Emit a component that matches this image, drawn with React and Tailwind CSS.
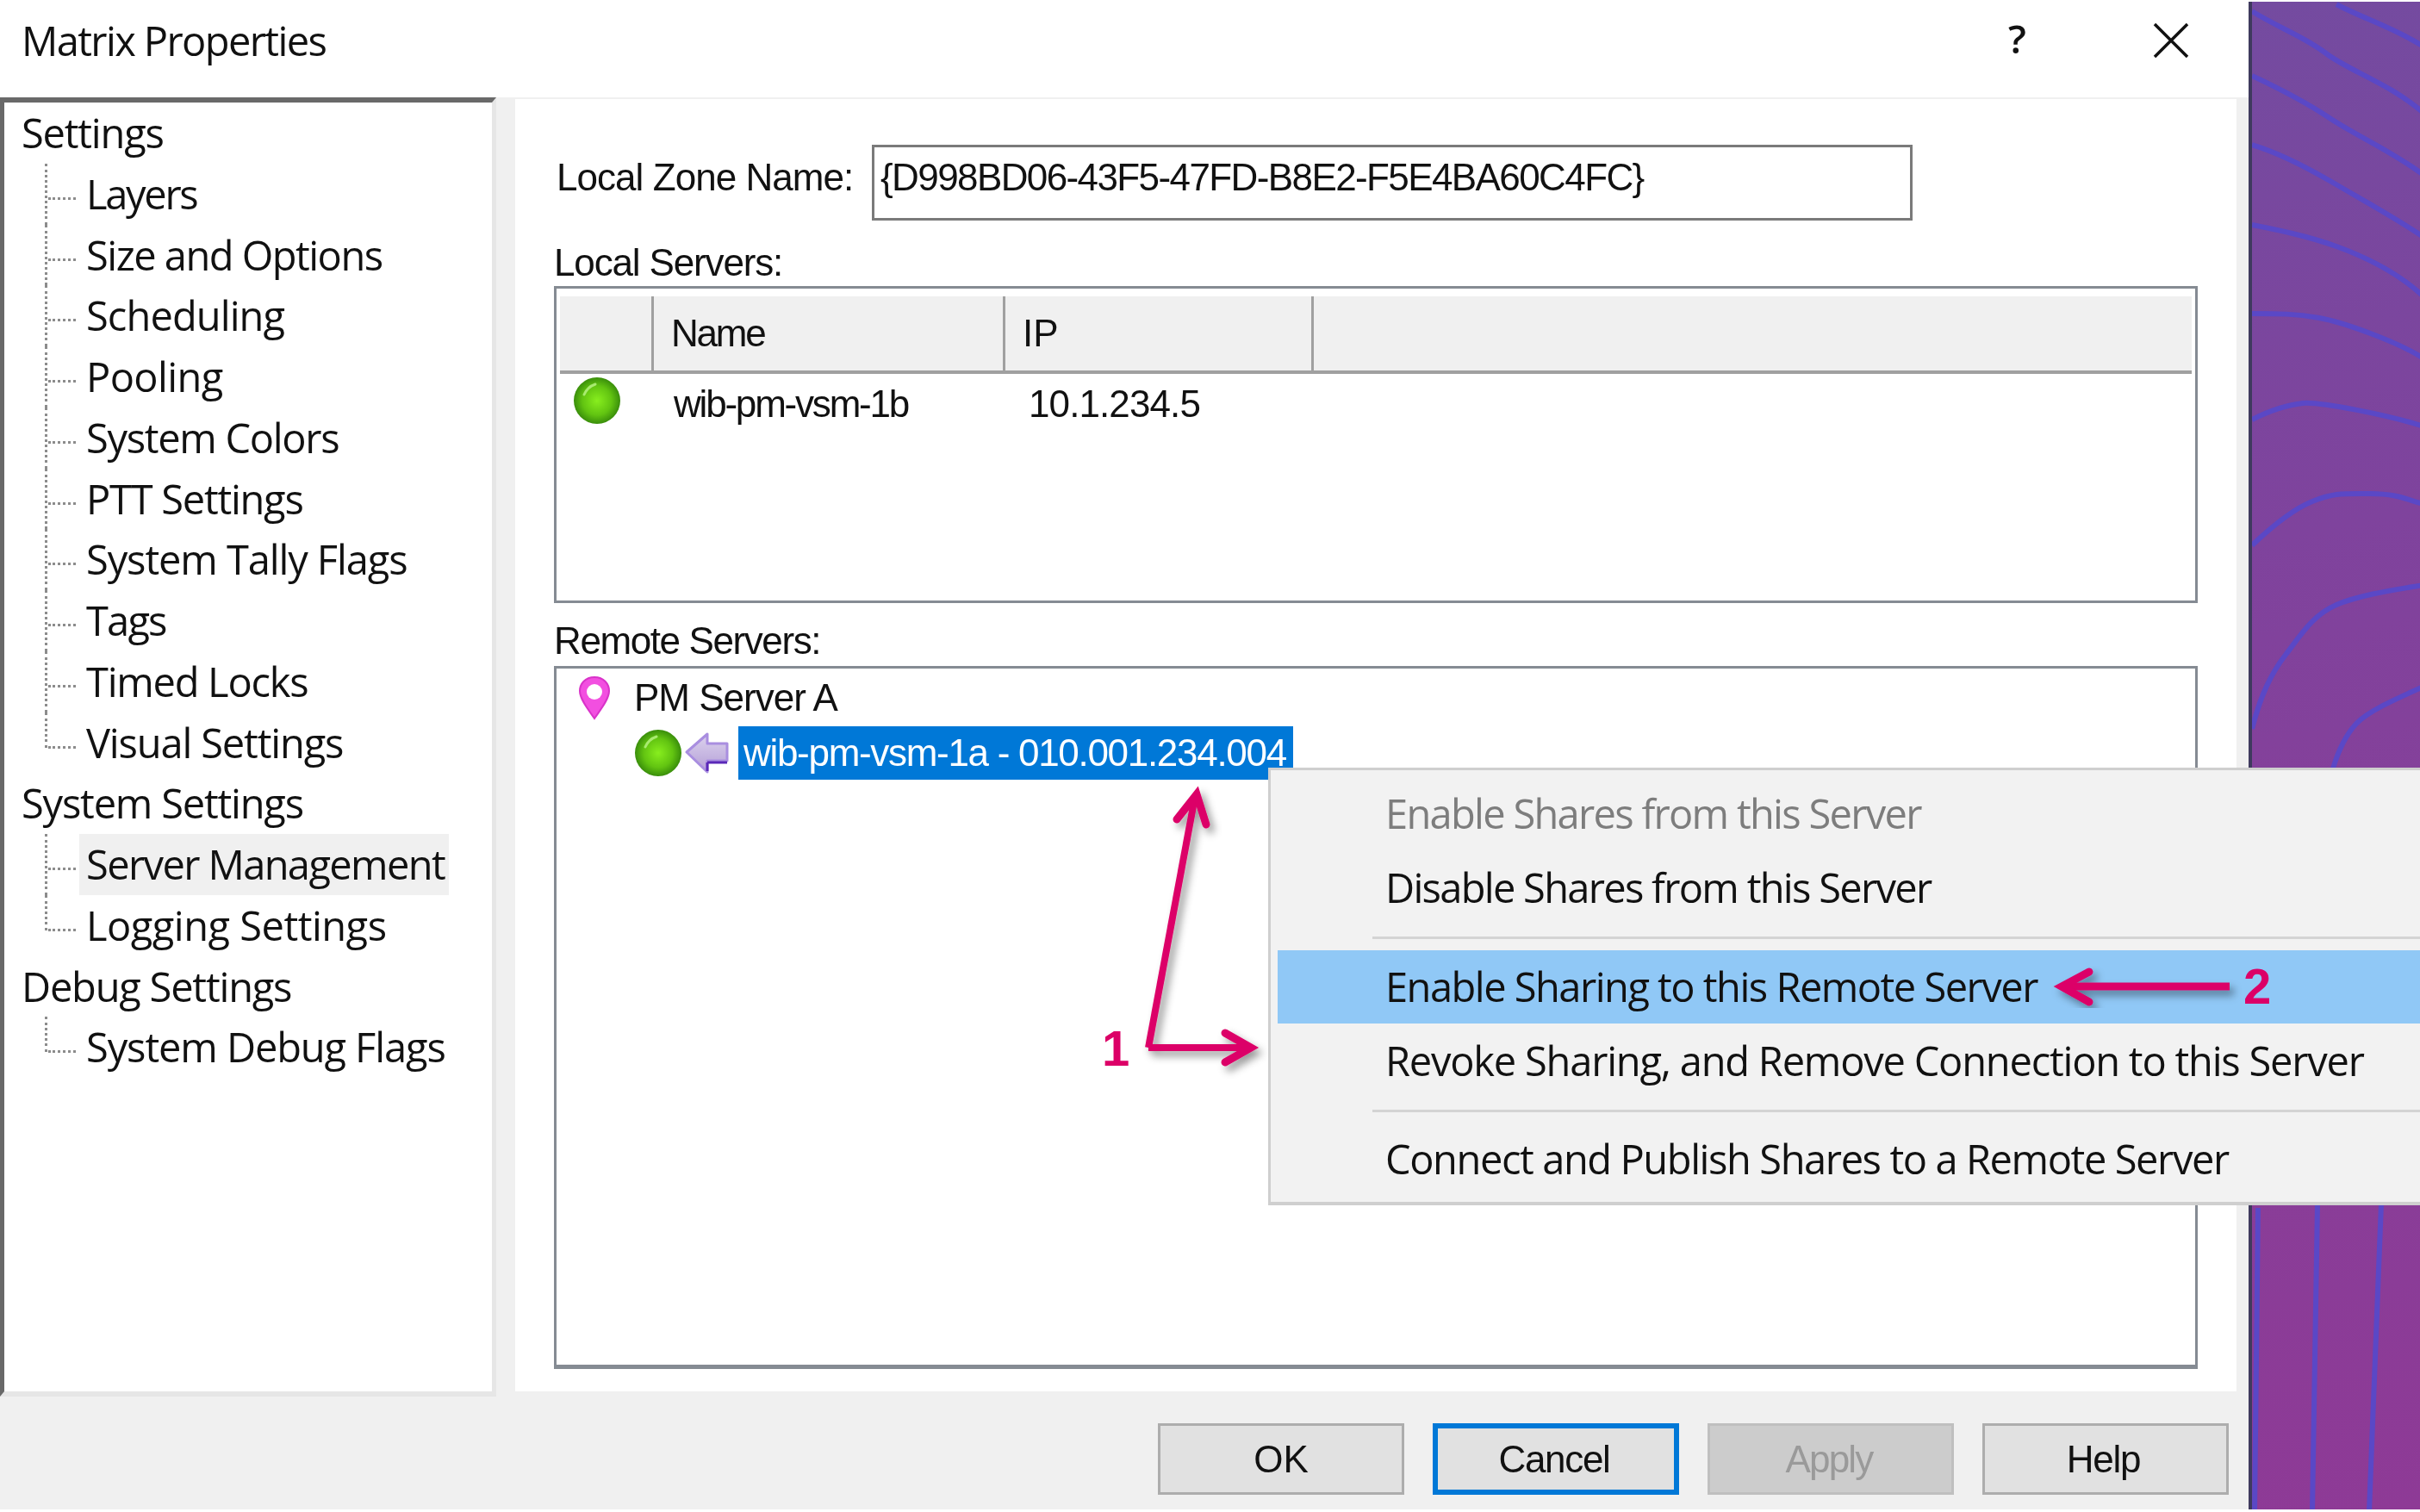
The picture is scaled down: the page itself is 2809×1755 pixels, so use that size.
import React from "react";

const TREE = [
  { t: "Settings", top: true, k: "tracking-[-1.2px]" },
  { t: "Layers", k: "tracking-[-2.3px]" },
  { t: "Size and Options", k: "tracking-[-1.5px]" },
  { t: "Scheduling", k: "tracking-[-0.9px]" },
  { t: "Pooling", k: "tracking-[-0.6px]" },
  { t: "System Colors", k: "tracking-[-1.3px]" },
  { t: "PTT Settings", k: "tracking-[-1.25px]" },
  { t: "System Tally Flags", k: "tracking-[-1.1px]" },
  { t: "Tags", k: "tracking-[-1.8px]" },
  { t: "Timed Locks", k: "tracking-[-1.25px]" },
  { t: "Visual Settings", last: true, k: "tracking-[-1.15px]" },
  { t: "System Settings", top: true, k: "tracking-[-1.2px]" },
  { t: "Server Management", sel: true, k: "tracking-[-1.6px]" },
  { t: "Logging Settings", last: true, k: "tracking-[-0.5px]" },
  { t: "Debug Settings", top: true, k: "tracking-[-1.2px]" },
  { t: "System Debug Flags", last: true, k: "tracking-[-1.1px]" },
];

function TreeRow({ t, top, last, sel, k }) {
  if (top) {
    return <div className={`h-[70.75px] flex items-center pl-[25px] whitespace-nowrap ${k}`}>{t}</div>;
  }
  return (
    <div className={`relative h-[70.75px] flex items-center pl-[92px] whitespace-nowrap ${k}`}>
      <span className={`absolute left-[52px] top-0 border-l-[3px] border-dotted border-[#8c8c8c] ${last ? "h-[41px]" : "h-full"}`} />
      <span className="absolute left-[56px] top-[39px] w-[32px] border-t-[3px] border-dotted border-[#8c8c8c]" />
      <span className={`pl-[8px] h-full w-[429px] flex items-center ${sel ? "bg-[#f0f0f0]" : ""}`}>{t}</span>
    </div>
  );
}

function Dot({ id }) {
  return (
    <svg width="56" height="56" viewBox="0 0 56 56" className="shrink-0">
      <defs>
        <radialGradient id={id} cx="50%" cy="50%" r="52%">
          <stop offset="0%" stopColor="#88ee1e" />
          <stop offset="60%" stopColor="#62c411" />
          <stop offset="100%" stopColor="#35880a" />
        </radialGradient>
      </defs>
      <circle cx="28" cy="28" r="27" fill={`url(#${id})`} />
      <path d="M13 21 Q17 12 26 9" stroke="#a8ea70" strokeWidth="3" fill="none" strokeLinecap="round" />
    </svg>
  );
}

function Pin() {
  return (
    <svg width="40" height="54" viewBox="0 0 40 54" className="shrink-0">
      <path d="M20 3 C9 3 3 11 3 19 C3 29 14 42 20 51 C26 42 37 29 37 19 C37 11 31 3 20 3 Z" fill="#f24fe0" stroke="#d933c9" strokeWidth="2" />
      <circle cx="20" cy="20" r="9" fill="#ffffff" />
    </svg>
  );
}

function LeftArrow() {
  return (
    <svg width="52" height="50" viewBox="0 0 52 50" className="shrink-0">
      <defs>
        <linearGradient id="la" x1="0" y1="0" x2="0" y2="1">
          <stop offset="0%" stopColor="#dcd2ee" />
          <stop offset="100%" stopColor="#b49fd6" />
        </linearGradient>
      </defs>
      <path d="M2 24 L26 3 L26 14 L49 14 L49 34 L26 34 L26 47 Z" fill="url(#la)" stroke="#a98ee0" strokeWidth="3" strokeLinejoin="round" />
      <path d="M26 36 L49 36 M26 36 L26 46" stroke="#5a28b8" strokeWidth="3" fill="none" />
    </svg>
  );
}

function Btn({ children, variant, track }) {
  const cls =
    variant === "focus"
      ? "bg-[#e1e1e1] border-[6px] border-[#0078d7] text-[#111]"
      : variant === "disabled"
      ? "bg-[#cccccc] border-[3px] border-[#bfbfbf] text-[#9a9a9a]"
      : "bg-[#e1e1e1] border-[3px] border-[#adadad] text-[#111]";
  return (
    <div className={`w-[286px] h-[83px] flex items-center justify-center ${cls} ${track}`}>{children}</div>
  );
}

function MenuItem({ children, h, hot, muted, track }) {
  return (
    <div
      className={`flex items-center pl-[125px] whitespace-nowrap ${h} ${track} ${hot ? "bg-[#90c8f6]" : ""} ${muted ? "text-[#7d7d7d]" : "text-[#111]"}`}
    >
      {children}
    </div>
  );
}

function Wallpaper() {
  const lines = [
    "M0 11 C30 30 60 40 86 60 S160 95 199 129",
    "M98 3 C130 20 165 30 199 52",
    "M0 86 C30 100 60 115 90 135 S165 175 199 201",
    "M0 166 C30 175 60 190 94 210 S165 250 199 273",
    "M0 259 C30 265 65 272 98 284 S170 315 199 342",
    "M0 362 C30 362 50 362 78 367 S170 395 199 414",
    "M0 485 C20 475 40 468 59 466 S160 480 199 493",
    "M0 631 C20 612 45 590 70 580 S105 571 137 571 S180 578 199 583",
    "M0 844 C10 805 22 780 39 758 S70 712 98 700 S170 682 199 677",
    "M94 890 C100 870 108 852 121 838 S165 810 199 795",
    "M7 1400 L3 1752",
    "M76 1395 L70 1752",
    "M150 1395 L136 1752",
  ];
  return (
    <div className="flex-1 mt-[2px] h-[1750px] bg-[linear-gradient(170deg,#744ba0_0%,#7f439d_35%,#85409a_55%,#8e3a96_100%)] border-l-[4px] border-[#3f3a5e] overflow-hidden">
      <svg width="199" height="1752" viewBox="0 0 199 1752" className="block">
        {lines.map((d, i) => (
          <path key={i} d={d} fill="none" stroke="#5a48c6" strokeWidth="6" />
        ))}
      </svg>
    </div>
  );
}

export default function App() {
  return (
    <div className="relative w-[2809px] h-[1755px] overflow-hidden bg-white flex items-start blur-[0.6px] font-['Liberation_Sans',Arial,sans-serif] text-[44px] text-[#111]">
      <div className="w-[2610px] h-[1752px] flex flex-col bg-[#f0f0f0]">
        {/* Title bar */}
        <div className="h-[113px] bg-white flex items-center pl-[25px] pr-[69px]">
          <span className="font-['Open_Sans',sans-serif] text-[47px] tracking-[-1.6px] text-[#111] flex-1 -mt-[19px]">Matrix Properties</span>
          <span className="font-['Open_Sans',sans-serif] font-semibold text-[46px] -mt-[24px] mr-[147px]">?</span>
          <svg width="42" height="42" viewBox="0 0 42 42" className="-mt-[20px]">
            <path d="M2 2 L40 40 M40 2 L2 40" stroke="#111" strokeWidth="3.5" />
          </svg>
        </div>

        {/* Body */}
        <div className="h-[1502px] flex items-start">
          <div className="w-[576px] h-[1508px] shrink-0 bg-white border-l-[5px] border-t-[6px] border-r-[5px] border-b-[6px] border-l-[#696969] border-t-[#696969] border-r-[#e6e6e6] border-b-[#e6e6e6] font-['Open_Sans',sans-serif] text-[47px]">
            <div className="-ml-[5px]">
              {TREE.map((r) => (
                <TreeRow key={r.t} {...r} />
              ))}
            </div>
          </div>

          <div className="ml-[22px] mt-[2px] w-[1998px] h-[1500px] bg-white pl-[45px] pt-[53px]">
            {/* Local zone */}
            <div className="flex items-start">
              <div className="w-[369px] pl-[3px] h-[88px] pt-[11px] leading-[54px] whitespace-nowrap tracking-[-0.95px]">Local Zone Name:</div>
              <div className="w-[1208px] h-[88px] border-[3px] border-[#7a7a7a] pl-[7px] pt-[8px] leading-[54px] whitespace-nowrap tracking-[-1.6px]">
                {"{D998BD06-43F5-47FD-B8E2-F5E4BA60C4FC}"}
              </div>
            </div>

            {/* Local servers */}
            <div className="h-[76px] pt-[21px] leading-[56px] tracking-[-1.15px]">Local Servers:</div>
            <div className="w-[1908px] h-[368px] border-[3px] border-[#858b93] pl-[4px] pr-[4px] pt-[9px]">
              <div className="h-[90px] bg-[#f0f0f0] border-b-[4px] border-[#a0a0a0] flex">
                <div className="w-[109px] h-full border-r-[3px] border-[#a0a0a0]" />
                <div className="w-[408px] h-full border-r-[3px] border-[#a0a0a0] pl-[20px] flex items-center tracking-[-2.2px]">Name</div>
                <div className="w-[358px] h-full border-r-[3px] border-[#a0a0a0] pl-[20px] flex items-center">IP</div>
              </div>
              <div className="flex items-center h-[62px]">
                <div className="w-[132px] pl-[15px] shrink-0"><Dot id="d1" /></div>
                <div className="w-[412px] shrink-0 mt-[8px] tracking-[-2.2px]">wib-pm-vsm-1b</div>
                <div className="mt-[8px] tracking-[-0.9px]">10.1.234.5</div>
              </div>
            </div>

            {/* Remote servers */}
            <div className="h-[73px] pt-[18px] leading-[52px] tracking-[-1.4px]">Remote Servers:</div>
            <div className="w-[1908px] h-[816px] border-[3px] border-[#858b93] border-b-[5px]">
              <div className="h-[67px] flex items-center pl-[24px]">
                <Pin />
                <span className="ml-[26px] whitespace-nowrap tracking-[-1px]">PM Server A</span>
              </div>
              <div className="h-[62px] flex items-center pl-[90px]">
                <Dot id="d2" />
                <span className="ml-[3px]"><LeftArrow /></span>
                <div className="ml-[10px] w-[644px] h-full bg-[#0078d7] text-white pl-[6px] flex items-center whitespace-nowrap tracking-[-1.3px]">
                  wib-pm-vsm-1a - 010.001.234.004
                </div>
              </div>
            </div>
          </div>
        </div>

        {/* Buttons */}
        <div className="flex-1 flex justify-end gap-[33px] pr-[23px] pt-[37px]">
          <Btn track="tracking-[0px]">OK</Btn>
          <Btn variant="focus" track="tracking-[-1.3px] pr-[4px]">Cancel</Btn>
          <Btn variant="disabled" track="tracking-[-1.8px] pr-[4px]">Apply</Btn>
          <Btn track="tracking-[-1.3px] pr-[5px]">Help</Btn>
        </div>
      </div>

      <Wallpaper />

      {/* Context menu */}
      <div className="absolute left-[1472px] top-[891px] w-[1337px] h-[508px] bg-[#f2f2f2] border-l-[3px] border-t-[3px] border-b-[4px] border-[#cfcfcf] pl-[8px] pt-[7px] font-['Open_Sans',sans-serif] text-[47px]">
        <MenuItem h="h-[86px]" muted track="tracking-[-1.7px]">Enable Shares from this Server</MenuItem>
        <MenuItem h="h-[86px]" track="tracking-[-1.7px]">Disable Shares from this Server</MenuItem>
        <div className="h-[30px] pl-[110px] flex items-center"><div className="w-full h-[3px] bg-[#d4d4d4]" /></div>
        <MenuItem h="h-[85px]" hot track="tracking-[-1.5px]">Enable Sharing to this Remote Server</MenuItem>
        <MenuItem h="h-[87px]" track="tracking-[-1.2px]">Revoke Sharing, and Remove Connection to this Server</MenuItem>
        <div className="h-[28px] pl-[110px] flex items-center"><div className="w-full h-[3px] bg-[#d4d4d4]" /></div>
        <MenuItem h="h-[85px]" track="tracking-[-1.4px]">Connect and Publish Shares to a Remote Server</MenuItem>
      </div>

      {/* Annotations */}
      <svg className="absolute left-0 top-0 pointer-events-none" width="2809" height="1755" viewBox="0 0 2809 1755">
        <defs>
          <filter id="sh" x="-20%" y="-20%" width="140%" height="140%">
            <feDropShadow dx="5" dy="6" stdDeviation="5" floodColor="#000" floodOpacity="0.4" />
          </filter>
        </defs>
        <g filter="url(#sh)" stroke="#dc0067" strokeWidth="8" fill="none">
          <path d="M1333 1216 L1387 925" />
          <path d="M1366 951 L1389 922 L1400 957" strokeLinecap="round" strokeWidth="9" />
          <path d="M1333 1216 L1452 1216" />
          <path d="M1422 1199 L1452 1216 L1422 1233" strokeLinecap="round" strokeWidth="9" />
        </g>
        <g filter="url(#sh)" stroke="#dc0067" strokeWidth="9" fill="none">
          <path d="M2393 1145 L2588 1145" />
          <path d="M2425 1128 L2393 1145 L2425 1163" strokeLinecap="round" />
        </g>
      </svg>
      <span className="absolute left-[1279px] top-[1184px] text-[58px] leading-[66px] font-bold text-[#dc0067]">1</span>
      <span className="absolute left-[2604px] top-[1112px] text-[58px] leading-[66px] font-bold text-[#dc0067]">2</span>
    </div>
  );
}
